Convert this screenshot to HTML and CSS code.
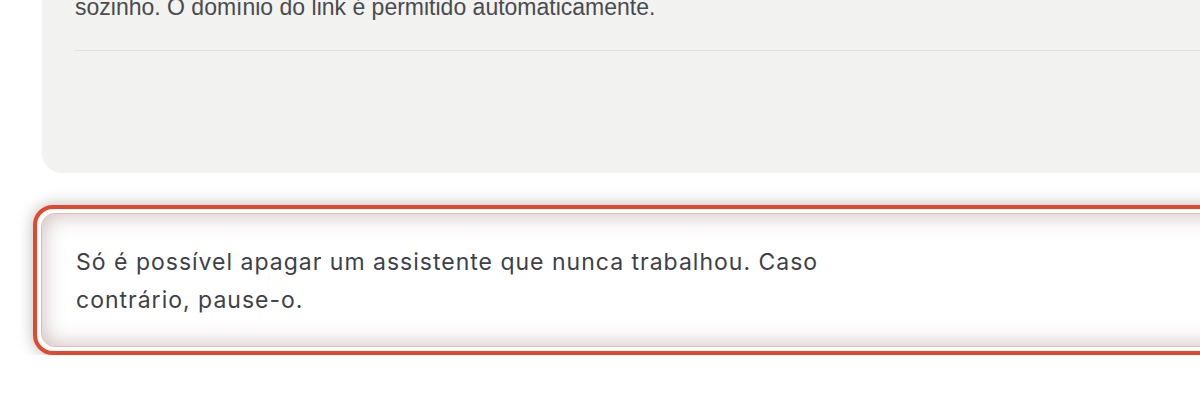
FILE: index.html
```html
<!DOCTYPE html>
<html lang="pt">
<head>
<meta charset="utf-8">
<title>Assistente</title>
<link rel="stylesheet" href="styles.css">
</head>
<body>
<div class="page">
  <section class="card">
    <p class="card-text">sozinho. O domínio do link é permitido automaticamente.</p>
    <hr class="divider">
    <div class="card-foot"></div>
  </section>
  <div class="highlight">
    <div class="notice">
      <p class="notice-text">Só é possível apagar um assistente que nunca trabalhou. Caso contrário, pause-o.</p>
    </div>
  </div>
</div>
</body>
</html>
```

FILE: styles.css
```css
html, body {
  margin: 0;
  padding: 0;
  background: #ffffff;
  overflow: hidden;
}

.page {
  display: flex;
  flex-direction: column;
  padding-left: 33px;
}

.card {
  margin-top: -34px;
  margin-left: 9px;
  margin-right: -120px;
  background: #f2f2f0;
  border-radius: 20px;
  padding: 24px 0 122px 33px;
}

.card-text {
  margin: 0 0 26px 0;
  font-family: "Liberation Sans", Arial, sans-serif;
  font-size: 23px;
  line-height: 34px;
  color: #4a4b4e;
}

.divider {
  margin: 0;
  border: 0;
  height: 1px;
  background: #e1e1de;
}

.card-foot {
  height: 0;
}

.highlight {
  margin-top: 32px;
  margin-right: -120px;
  border: 4px solid #e0492d;
  border-radius: 20px;
  padding: 4px;
  background: #ffffff;
  box-shadow: 0 0 16px rgba(0, 0, 0, 0.28);
}

.notice {
  border: 1px solid #d6bcba;
  border-radius: 14px;
  padding: 29px 34px 27px;
  background: #ffffff;
  box-shadow: inset 0 0 22px rgba(140, 95, 95, 0.45);
}

.notice-text {
  margin: 0;
  max-width: 800px;
  font-family: "Inter", "Noto Sans", sans-serif;
  font-size: 23px;
  letter-spacing: 1px;
  line-height: 38px;
  color: #3e4147;
}
```
